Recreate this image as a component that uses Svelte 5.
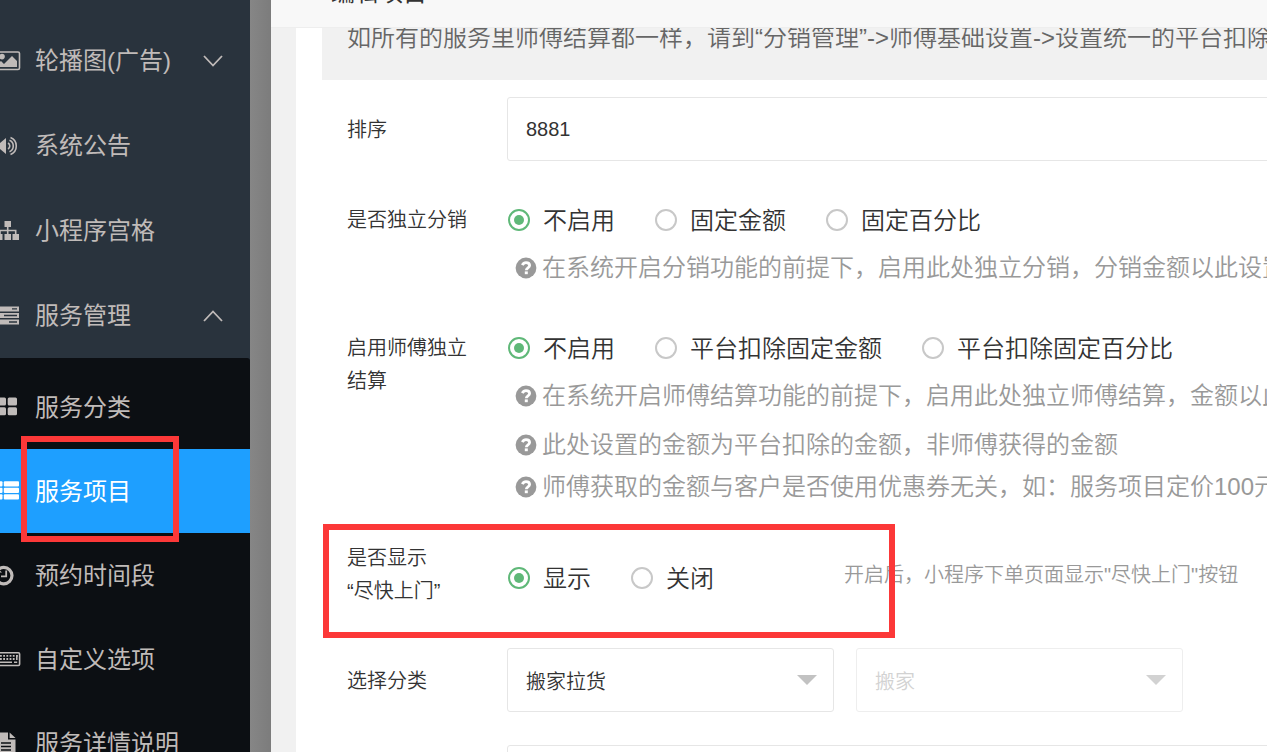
<script lang="ts">
    const menu = [
        { icon: 'image', label: '轮播图(广告)', arrow: 'down' },
        { icon: 'volume', label: '系统公告' },
        { icon: 'sitemap', label: '小程序宫格' },
        { icon: 'server', label: '服务管理', arrow: 'up' }
    ];

    const submenu = [
        { icon: 'grid', label: '服务分类' },
        { icon: 'list', label: '服务项目' },
        { icon: 'history', label: '预约时间段' },
        { icon: 'keyboard', label: '自定义选项' },
        { icon: 'file', label: '服务详情说明' }
    ];

    let active = $state('服务项目');
    let sort = $state('8881');
    let share = $state('不启用');
    let settle = $state('不启用');
    let fast = $state('显示');
</script>

{#snippet icon(name: string)}
    <svg class="icon" viewBox="0 -12 24 24" aria-hidden="true">
        {#if name === 'image'}
            <rect x="-5" y="-9" width="24.5" height="17.5" rx="1.5" fill="none" stroke="currentColor" stroke-width="1.6" />
            <circle cx="2" cy="-4.4" r="2.8" />
            <path d="M-3 6V3L1 0L4 3L12 -5L17 0V6Z" />
        {:else if name === 'volume'}
            <path d="M-5 -3H0L6 -8V8L0 3H-5Z" />
            <path d="M8 -3a3.4 3.4 0 0 1 0 6M9.5 -5.7a6.2 6.2 0 0 1 0 11.4M10.5 -8.4a9 9 0 0 1 0 16.8" fill="none" stroke="currentColor" stroke-width="1.6" />
        {:else if name === 'sitemap'}
            <path d="M4.5 -10h6.5v6h-6.5zM-3 3h5.5v6H-3zM4.5 3h6.5v6h-6.5zM12.5 3h6.5v6h-6.5z" />
            <path d="M7.7 -4V3M0 3V-0.5H15.7V3" fill="none" stroke="currentColor" stroke-width="1.6" />
        {:else if name === 'server'}
            <path fill-rule="evenodd" d="M-5 -9.5H19v5H-5zM12 -7.8v1.4h5v-1.4zM-5 -3H19v5H-5zM4 -1.2V0.2H17v-1.4zM-5 3.5H19v5H-5zM9 5.3v1.4h8v-1.4z" />
        {:else if name === 'grid'}
            <rect x="-3" y="-9.5" width="9" height="8" rx="1.5" />
            <rect x="7.7" y="-9.5" width="9.3" height="8" rx="1.5" />
            <rect x="-3" y="0.3" width="9" height="8" rx="1.5" />
            <rect x="7.7" y="0.3" width="9.3" height="8" rx="1.5" />
        {:else if name === 'list'}
            {#each [-9.7, -3.2, 3.3] as y}
                <rect x="-5" {y} width="7.5" height="5.2" rx="1" />
                <rect x="3.8" {y} width="15.2" height="5.2" rx="1" />
            {/each}
        {:else if name === 'history'}
            <path d="M-2 -5.2A8.2 8.2 0 1 1 -2 6.4" fill="none" stroke="currentColor" stroke-width="3.2" />
            <path d="M6.2 -4.4V1.4H1" fill="none" stroke="currentColor" stroke-width="1.8" />
            <path d="M-5 -9L2 -2.5H-5Z" />
        {:else if name === 'keyboard'}
            <rect x="-5" y="-6.3" width="24.6" height="12.8" rx="1.2" fill="none" stroke="currentColor" stroke-width="1.6" />
            <path d="M0 -3.2H18M0 0H16" fill="none" stroke="currentColor" stroke-width="1.8" stroke-dasharray="1.8 1.4" />
            <path d="M0 3.3H12M14 3.3h3.2M16.8 -4v5" fill="none" stroke="currentColor" stroke-width="1.6" />
        {:else if name === 'file'}
            <path fill-rule="evenodd" d="M-5 -10.5H8V-3.5H15.5V12H-5ZM1 -0.8V0.7H11V-0.8ZM1 2.8V4.3H11V2.8ZM1 6.2V7.7H11V6.2Z" />
            <path d="M9.6 -10.5L15.5 -5H9.6Z" />
        {/if}
    </svg>
{/snippet}

{#snippet help(text: string)}
    <p class="help">
        <svg viewBox="0 0 22 22" aria-hidden="true">
            <circle cx="11" cy="11" r="10.4" fill="currentColor" />
            <path d="M7.3 8.2C8.3 6.3 9.5 5.7 11 5.7C13 5.7 14.6 6.8 14.6 8.6C14.6 10.9 11.3 10.8 11.3 13.2" fill="none" stroke="#fff" stroke-width="2.8" />
            <rect x="9.8" y="14.4" width="3" height="2.8" fill="#fff" />
        </svg>
        <span>{text}</span>
    </p>
{/snippet}

<div class="page">
    <nav class="sidebar">
        <ul class="menu">
            {#each menu as item}
                <li>
                    <a class="item top" href="#{item.icon}">
                        {@render icon(item.icon)}
                        <span>{item.label}</span>
                        {#if item.arrow}
                            <svg class="arrow" class:up={item.arrow === 'up'} viewBox="0 0 20 12" aria-hidden="true">
                                <path d="M1 1L10 10.5L19 1" fill="none" stroke="currentColor" stroke-width="1.8" />
                            </svg>
                        {/if}
                    </a>
                </li>
            {/each}
        </ul>
        <ul class="menu sub">
            {#each submenu as item}
                <li class="sub-row">
                    <a class="item" class:active={item.label === active} href="#{item.icon}" onclick={() => active = item.label}>
                        {@render icon(item.icon)}
                        <span>{item.label}</span>
                    </a>
                    {#if item.label === '服务项目'}
                        <div class="mark mark-menu"></div>
                    {/if}
                </li>
            {/each}
        </ul>
    </nav>

    <div class="shade"></div>

    <main class="dialog">
        <header class="dialog-head">
            <h1>编辑项目</h1>
        </header>
        <div class="dialog-body">
            <form class="card">
                <blockquote>如所有的服务里师傅结算都一样，请到“分销管理”->师傅基础设置->设置统一的平台扣除的金额</blockquote>

                <div class="row">
                    <label class="name" for="sort">排序</label>
                    <input id="sort" class="text" type="text" bind:value={sort} />
                </div>

                <div class="row" role="radiogroup" aria-labelledby="share-name">
                    <span class="name" id="share-name">是否独立分销</span>
                    <div>
                        <div class="radios">
                            {#each ['不启用', '固定金额', '固定百分比'] as option}
                                <label class="radio"><input type="radio" name="share" value={option} bind:group={share} /><span>{option}</span></label>
                            {/each}
                        </div>
                        {@render help('在系统开启分销功能的前提下，启用此处独立分销，分销金额以此设置为准')}
                    </div>
                </div>

                <div class="row settle" role="radiogroup" aria-labelledby="settle-name">
                    <span class="name" id="settle-name">启用师傅独立<br />结算</span>
                    <div>
                        <div class="radios">
                            {#each ['不启用', '平台扣除固定金额', '平台扣除固定百分比'] as option}
                                <label class="radio"><input type="radio" name="settle" value={option} bind:group={settle} /><span>{option}</span></label>
                            {/each}
                        </div>
                        {@render help('在系统开启师傅结算功能的前提下，启用此处独立师傅结算，金额以此设置为准')}
                        <div class="more">
                            {@render help('此处设置的金额为平台扣除的金额，非师傅获得的金额')}
                            {@render help('师傅获取的金额与客户是否使用优惠券无关，如：服务项目定价100元')}
                        </div>
                    </div>
                </div>

                <div class="row fast" role="radiogroup" aria-labelledby="fast-name">
                    <span class="name" id="fast-name">是否显示<br />“尽快上门”</span>
                    <div class="inline">
                        <div class="radios">
                            {#each ['显示', '关闭'] as option}
                                <label class="radio"><input type="radio" name="fast" value={option} bind:group={fast} /><span>{option}</span></label>
                            {/each}
                        </div>
                        <p class="hint">开启后，小程序下单页面显示"尽快上门"按钮</p>
                    </div>
                    <div class="mark mark-row"></div>
                </div>

                <div class="row category">
                    <label class="name" for="category">选择分类</label>
                    <div class="selects">
                        <div class="select">
                            <select id="category"><option>搬家拉货</option></select>
                        </div>
                        <div class="select disabled">
                            <select aria-label="子分类" disabled><option>搬家</option></select>
                        </div>
                    </div>
                </div>

                <div class="row">
                    <span class="name"></span>
                    <input class="text" type="text" aria-label="名称" />
                </div>
            </form>
        </div>
    </main>
</div>

<style>
:global(body) {
    margin: 0;
    overflow: hidden;
}

.page {
    display: flex;
    height: 100vh;
    overflow: hidden;
    font-family: "Liberation Sans", "Noto Sans CJK SC", sans-serif;
    font-size: 24px;
    color: #333;
}

.page * {
    box-sizing: border-box;
}

/* sidebar */
.sidebar {
    flex: none;
    display: flex;
    flex-direction: column;
    width: 250px;
    padding-top: 18px;
    background: #29333d;
    color: #c0bbb9;
}

.menu {
    margin: 0;
    padding: 0;
    list-style: none;
}

.sub {
    flex: 1;
    padding-top: 7px;
    background: #0c0f13;
    border-top-right-radius: 3px;
}

.sub-row {
    position: relative;
}

.item {
    display: flex;
    align-items: center;
    gap: 11px;
    height: 84px;
    padding-right: 27px;
    color: inherit;
    text-decoration: none;
    white-space: nowrap;
}

.item.top {
    height: 85px;
}

.item span,
.radio span {
    padding-bottom: 4px;
}

.item.active {
    background: #1e9fff;
    color: #fff;
}

.icon {
    flex: none;
    width: 24px;
    height: 24px;
    fill: currentColor;
}

.arrow {
    width: 20px;
    height: 12px;
    margin-left: auto;
}

.arrow.up {
    transform: rotate(180deg);
}

.shade {
    flex: none;
    width: 21px;
    background: linear-gradient(to right, #868686, #7c7c7c);
}

/* dialog */
.dialog {
    flex: 1;
    min-width: 0;
    display: flex;
    flex-direction: column;
    overflow: hidden;
    background: #f1f1f1;
}

.dialog-head {
    flex: none;
    display: flex;
    align-items: flex-end;
    height: 28px;
    padding: 0 60px 22px;
    overflow: hidden;
    background: #f8f8f8;
    border-bottom: 1px solid #eee;
}

.dialog-head h1 {
    margin: 0;
    font-size: 24px;
    font-weight: 400;
    line-height: 24px;
}

.dialog-body {
    flex: 1;
    padding-left: 25px;
}

.card {
    min-width: 1040px;
    min-height: 100%;
    padding: 0 26px;
    background: #fff;
    font-weight: 350;
}

blockquote {
    margin: 0 0 17px;
    padding: 0 25px 32px;
    overflow: hidden;
    background: #f1f1f1;
    color: #666;
    line-height: 20px;
    white-space: nowrap;
}

.row {
    position: relative;
    display: grid;
    grid-template-columns: 160px 1fr;
    align-items: start;
    margin: 0 0 26px 25px;
}

.name {
    padding-top: 17px;
    font-size: 20px;
    line-height: 33px;
}

.text,
select {
    width: 100%;
    height: 64px;
    padding: 0 18px;
    border: 1px solid #e6e6e6;
    border-radius: 3px;
    background: #fff;
    color: #333;
    font-family: inherit;
    font-size: 20px;
    font-weight: inherit;
    outline: none;
}

.radios {
    display: flex;
    gap: 40px;
    padding: 9px 0 0 1px;
}

.radio {
    display: flex;
    align-items: center;
    gap: 13px;
    height: 48px;
    white-space: nowrap;
    cursor: pointer;
}

.radio input {
    appearance: none;
    display: grid;
    place-items: center;
    width: 22px;
    height: 22px;
    margin: 0;
    border: 2px solid #c8c8c8;
    border-radius: 50%;
}

.radio input:checked {
    border-color: #5fb878;
}

.radio input:checked::before {
    content: "";
    width: 10px;
    height: 10px;
    border-radius: 50%;
    background: #5fb878;
}

.help {
    display: flex;
    align-items: center;
    gap: 5px;
    margin: 3px 0 0 8px;
    color: #999;
    line-height: 42px;
    white-space: nowrap;
}

.help svg {
    flex: none;
    width: 22px;
    height: 22px;
}

.more {
    margin-top: 7px;
}

.more .help {
    margin-top: 0;
}

.settle {
    margin-bottom: 17px;
}

.fast {
    min-height: 114px;
    margin-bottom: 9px;
}

.inline {
    display: flex;
    align-items: center;
    padding-top: 20px;
}

.inline .radios {
    width: 337px;
}

.hint {
    margin: 0;
    color: #999;
    font-size: 20px;
    white-space: nowrap;
}

.category {
    margin-bottom: 33px;
}

.selects {
    display: flex;
    gap: 22px;
}

.select {
    position: relative;
    width: 327px;
}

.select::after {
    content: "";
    position: absolute;
    top: 27px;
    right: 17px;
    border: 10px solid transparent;
    border-top-color: #c2c2c2;
    border-bottom: 0;
    pointer-events: none;
}

select {
    appearance: none;
    padding-top: 3px;
}

.disabled select {
    border-color: #eee;
    color: #d2d2d2;
    opacity: 1;
}

.disabled::after {
    border-top-color: #d2d2d2;
}

/* red highlight frames */
.mark {
    position: absolute;
    border: 6px solid #fc3838;
    pointer-events: none;
}

.mark-menu {
    top: -13px;
    left: 21px;
    z-index: 1;
    width: 158px;
    height: 106px;
}

.mark-row {
    top: -1px;
    left: -24px;
    width: 572px;
    height: 114px;
}
</style>
